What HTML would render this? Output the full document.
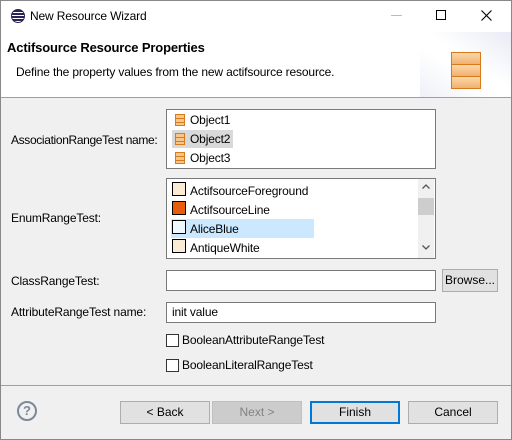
<!DOCTYPE html>
<html><head><style>
*{margin:0;padding:0;box-sizing:border-box}
body{width:512px;height:440px;background:#f0f0f0;font-family:"Liberation Sans",sans-serif;font-size:12px;color:#000;position:relative;overflow:hidden}
.a{position:absolute;white-space:nowrap}
.t{line-height:14px;letter-spacing:-0.15px}
.box{position:absolute;background:#fff;border:1px solid #7a7a7a}
.btn{position:absolute;background:#e1e1e1;border:1px solid #adadad;text-align:center;line-height:20px;font-size:12px}
.ico{position:absolute;width:10px;height:12px;border:1px solid #d77a1c;background:repeating-linear-gradient(#f8c68a 0 3px,#d77a1c 3px 4px)}
.sw{position:absolute;width:14px;height:14px;border:1px solid #000}
.cb{position:absolute;width:13px;height:13px;border:1px solid #333;background:#fff}
</style></head><body>
<div class="a" style="left:0;top:0;width:512px;height:440px;border:1px solid #888"></div>
<div class="a" style="left:1px;top:1px;width:510px;height:97px;background:#fff"></div>
<div class="a" style="left:420px;top:32px;width:91px;height:66px;background:linear-gradient(215deg,#e8ebf5 0%,#fff 45%,#fff 60%,#eef0f8 100%)"></div>
<div class="a" style="left:1px;top:97px;width:510px;height:1px;background:#a0a0a0"></div>
<!-- title -->
<div class="a" style="left:11px;top:9px;width:14px;height:14px;border-radius:50%;background:repeating-linear-gradient(#2c2255 0 2px,#fff 2px 3px);border:1px solid #2c2255"></div>
<div class="a t" style="left:30px;top:9px">New Resource Wizard</div>
<div class="a" style="left:391px;top:15px;width:11px;height:1px;background:#bbb"></div>
<div class="a" style="left:436px;top:10px;width:10px;height:10px;border:1px solid #000"></div>
<svg class="a" style="left:481px;top:10px" width="11" height="11"><path d="M0.5 0.5L10.5 10.5M10.5 0.5L0.5 10.5" stroke="#000" stroke-width="1.1"/></svg>
<!-- header -->
<div class="a t" style="left:7px;top:41px;font-weight:bold;font-size:13px">Actifsource Resource Properties</div>
<div class="a t" style="left:16px;top:65px">Define the property values from the new actifsource resource.</div>
<div class="a" style="left:451px;top:52px;width:30px;height:37px;border:1px solid #d77a1c;background:repeating-linear-gradient(#fbd7a8 0,#f2b072 11px,#d77a1c 11px 12px)"></div>
<!-- labels -->
<div class="a t" style="left:11px;top:133px;letter-spacing:-0.35px">AssociationRangeTest name:</div>
<div class="a t" style="left:11px;top:211px">EnumRangeTest:</div>
<div class="a t" style="left:11px;top:274px">ClassRangeTest:</div>
<div class="a t" style="left:11px;top:305px">AttributeRangeTest name:</div>
<!-- list1 -->
<div class="box" style="left:166px;top:109px;width:270px;height:60px"></div>
<div class="a" style="left:172px;top:130px;width:61px;height:18px;background:#d9d9d9"></div>
<div class="ico" style="left:175px;top:114px"></div><div class="a t" style="left:190px;top:113px">Object1</div>
<div class="ico" style="left:175px;top:133px"></div><div class="a t" style="left:190px;top:132px">Object2</div>
<div class="ico" style="left:175px;top:152px"></div><div class="a t" style="left:190px;top:151px">Object3</div>
<!-- list2 -->
<div class="box" style="left:166px;top:178px;width:270px;height:81px"></div>
<div class="a" style="left:418px;top:179px;width:16px;height:79px;background:#f0f0f0"></div>
<div class="a" style="left:418px;top:198px;width:16px;height:17px;background:#cdcdcd"></div>
<svg class="a" style="left:422px;top:184px" width="8" height="5"><path d="M0.5 4.5L4 1L7.5 4.5" stroke="#555" fill="none" stroke-width="1.3"/></svg>
<svg class="a" style="left:422px;top:245px" width="8" height="5"><path d="M0.5 0.5L4 4L7.5 0.5" stroke="#555" fill="none" stroke-width="1.3"/></svg>
<div class="a" style="left:171px;top:219px;width:143px;height:19px;background:#cce8ff"></div>
<div class="sw" style="left:172px;top:182px;background:#fbebd5"></div><div class="a t" style="left:190px;top:184px">ActifsourceForeground</div>
<div class="sw" style="left:172px;top:201px;background:#e85d0c"></div><div class="a t" style="left:190px;top:203px">ActifsourceLine</div>
<div class="sw" style="left:172px;top:220px;background:#f0f8ff"></div><div class="a t" style="left:190px;top:222px">AliceBlue</div>
<div class="sw" style="left:172px;top:239px;background:#faebd7"></div><div class="a t" style="left:190px;top:241px">AntiqueWhite</div>
<!-- inputs -->
<div class="box" style="left:166px;top:270px;width:270px;height:21px"></div>
<div class="btn" style="left:442px;top:269px;width:56px;height:23px">Browse...</div>
<div class="box" style="left:166px;top:302px;width:270px;height:21px"></div>
<div class="a t" style="left:172px;top:305px">init value</div>
<div class="cb" style="left:166px;top:334px"></div><div class="a t" style="left:182px;top:333px">BooleanAttributeRangeTest</div>
<div class="cb" style="left:166px;top:359px"></div><div class="a t" style="left:182px;top:358px">BooleanLiteralRangeTest</div>
<!-- footer -->
<div class="a" style="left:1px;top:385px;width:510px;height:1px;background:#a0a0a0"></div>
<div class="a" style="left:17px;top:401px;width:20px;height:20px;border:2px solid #7a8a99;border-radius:50%;text-align:center;line-height:16px;font-weight:bold;color:#7a8a99;font-size:13px">?</div>
<div class="btn" style="left:120px;top:401px;width:90px;height:23px">&lt; Back</div>
<div class="btn" style="left:212px;top:401px;width:90px;height:23px;background:#cccccc;border-color:#bfbfbf;color:#838383">Next &gt;</div>
<div class="btn" style="left:310px;top:401px;width:90px;height:23px;border:2px solid #0078d7;line-height:19px">Finish</div>
<div class="btn" style="left:408px;top:401px;width:90px;height:23px">Cancel</div>
</body></html>
